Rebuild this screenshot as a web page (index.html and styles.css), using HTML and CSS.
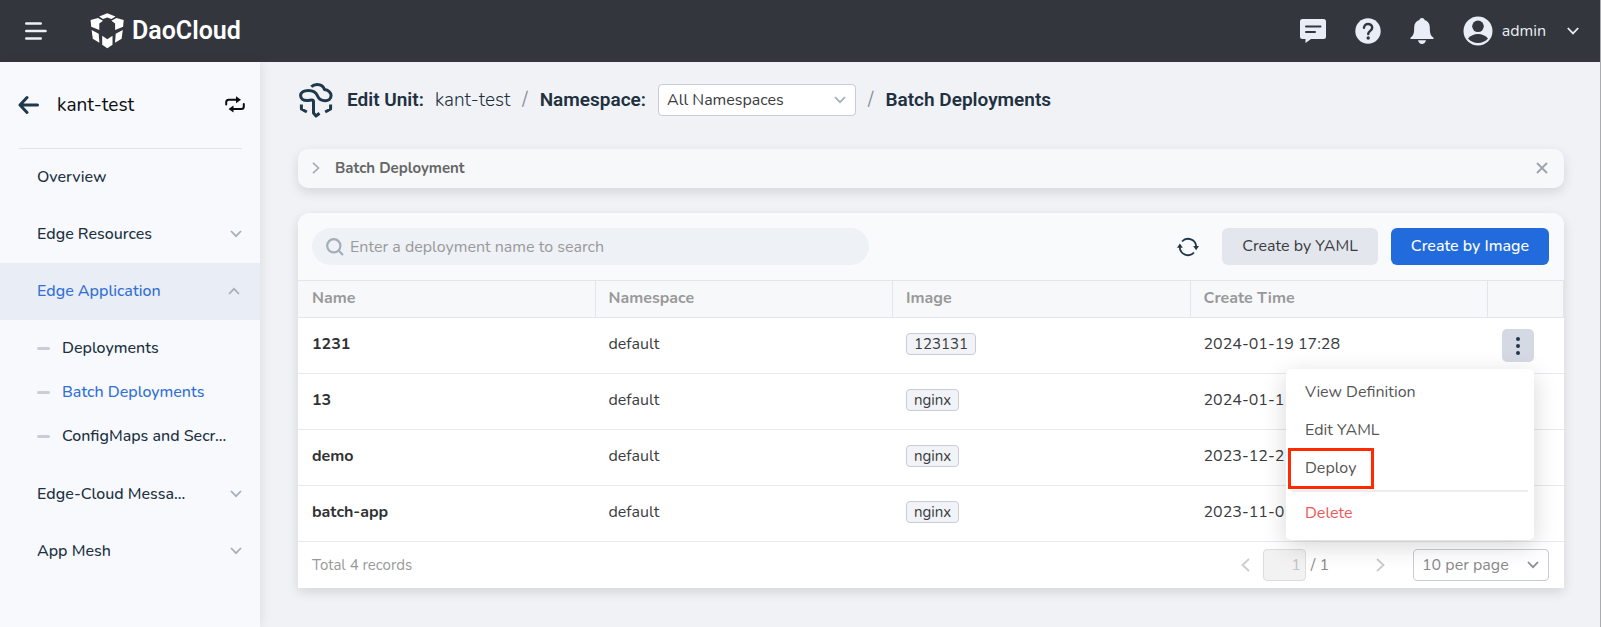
FILE: index.html
```html
<!DOCTYPE html>
<html lang="en">
<head>
<meta charset="utf-8">
<title>Batch Deployments - DaoCloud</title>
<link rel="stylesheet" href="styles.css">
</head>
<body>
<header class="topbar">
  <button class="icon-btn" aria-label="Toggle navigation">
    <svg width="22" height="20" viewBox="0 0 22 20" fill="none" stroke="#edf0f5" stroke-width="2.6" stroke-linecap="round"><path d="M1.3 2.5h14.4M1.3 10h19.2M1.3 17.500h14.400"/></svg>
  </button>
  <a class="brand" href="#">
    <svg width="34" height="36" viewBox="0 0 34 36" fill="#fff"><path d="M17.200.2 25.500 3.500 21.500 6 17.200 4.500 13 6 9.200 3.500z"/><path d="M.6 7 8 5l5 2.700-3.700 2.800V17L1.200 13.700z"/><path d="M33.700 7 26.400 5l-5 2.700 3.700 2.800V17l8-3.300z"/><path d="M1.600 17 8.700 20.800 9.400 29.800 2.800 25.700z"/><path d="M32.800 17 25.700 20.800 25 29.800 31.600 25.700z"/><path d="M12.200 22.800 17.300 26.200 22.500 22.800V31.800L17.300 35.300 12.200 31.800z"/></svg>
    <span>DaoCloud</span>
  </a>
  <nav class="top-actions" aria-label="Account">
    <button class="icon-btn" aria-label="Messages"><svg width="26" height="24" viewBox="0 0 26 24"><path fill="#e9eef6" d="M2.500 0h21A2.500 2.500 0 0 1 26 2.500v15a2.500 2.500 0 0 1-2.500 2.500H11l-5.500 4v-4h-3A2.500 2.500 0 0 1 0 17.500v-15A2.500 2.500 0 0 1 2.500 0z"/><path stroke="#33363c" stroke-width="2" stroke-linecap="round" d="M6 7.500h14.500M6 13h9"/></svg></button>
    <button class="icon-btn" aria-label="Help"><svg width="26" height="26" viewBox="0 0 26 26"><circle cx="13" cy="13" r="12.700" fill="#e9eef6"/><path fill="none" stroke="#33363c" stroke-width="2.400" stroke-linecap="round" d="M9 9.800C9 7.500 10.800 6 13 6s4.200 1.500 4.200 3.700c0 3-4 3.300-4 6.300"/><circle cx="13.200" cy="20" r="1.700" fill="#33363c"/></svg></button>
    <button class="icon-btn" aria-label="Notifications"><svg width="24" height="26" viewBox="0 0 24 26" fill="#e9eef6"><path d="M12 0c1.500 0 2.400.8 2.600 2 3.400 1 5.200 3.800 5.200 7.200 0 6 .8 8.500 3.500 10.300.7.500.5 1.500-.5 1.500H1.200c-1 0-1.200-1-.5-1.500 2.700-1.800 3.500-4.300 3.500-10.300C4.200 5.800 6 3 9.400 2 9.600.8 10.500 0 12 0zM8 22.200h8C15.500 24.600 14 26 12 26s-3.500-1.400-4-3.800z"/></svg></button>
    <button class="account">
      <svg width="30" height="30" viewBox="0 0 30 30"><circle cx="15" cy="15" r="14.500" fill="#e9eef6"/><circle cx="15" cy="10.300" r="5.800" fill="#33363c"/><path fill="#33363c" d="M5 22.500c2.500-3 6-4.500 10-4.500s7.500 1.500 10 4.500C22.500 25.300 19 27 15 27S7.500 25.300 5 22.500z"/></svg>
      <span>admin</span>
      <svg class="account-caret" width="12" height="8" viewBox="0 0 12 8" fill="none" stroke="#e9eef6" stroke-width="1.800"><path d="m.8 1 5.200 5.400L11.200 1"/></svg>
    </button>
  </nav>
</header>

<div class="layout">
  <aside class="sidebar">
    <div class="unit">
      <button class="icon-btn" aria-label="Back"><svg width="22" height="20" viewBox="0 0 22 20" fill="none" stroke="#20384c" stroke-width="3"><path d="M9 2.500 2 10l7 7.500M2.500 10H19.500" stroke-linecap="round" stroke-linejoin="round"/></svg></button>
      <span class="unit-name">kant-test</span>
      <button class="icon-btn" aria-label="Switch unit"><svg width="20" height="17" viewBox="0 0 20 17" fill="none" stroke="#0b0d10" stroke-width="2"><path d="M1.200 8.500V6.200c0-1.500 1-2.500 2.500-2.500H12M18.800 8v2.500c0 1.500-1 2.500-2.500 2.500H8" stroke-linecap="round"/><path d="m11 .3 5 3.400-5 3.500zM8.500 9.600l-5 3.400 5 3.500z" fill="#0b0d10" stroke="none"/></svg></button>
    </div>
    <nav class="menu" aria-label="Unit">
      <a class="menu-item" href="#">Overview</a>
      <a class="menu-item" href="#">Edge Resources <svg class="caret" viewBox="0 0 12 8"><path d="m1 1 5 5.200L11 1"/></svg></a>
      <a class="menu-item active" href="#">Edge Application <svg class="caret" viewBox="0 0 12 8"><path d="m1 7 5-5.200L11 7"/></svg></a>
      <div class="submenu">
        <a class="submenu-item" href="#">Deployments</a>
        <a class="submenu-item current" href="#">Batch Deployments</a>
        <a class="submenu-item" href="#">ConfigMaps and Secr...</a>
      </div>
      <a class="menu-item" href="#">Edge-Cloud Messa... <svg class="caret" viewBox="0 0 12 8"><path d="m1 1 5 5.200L11 1"/></svg></a>
      <a class="menu-item" href="#">App Mesh <svg class="caret" viewBox="0 0 12 8"><path d="m1 1 5 5.200L11 1"/></svg></a>
    </nav>
  </aside>

  <main class="content">
    <div class="crumbs">
      <svg class="crumb-icon" width="36" height="36" viewBox="0 0 36 36" fill="none" stroke="#20384c" stroke-width="3" stroke-linejoin="round"><path d="M13.300 4.800C15 3 17 2.400 19.200 2.400c3.600 0 6.300 2 7.300 5.200 3.700.3 6.600 2.900 6.600 6 0 3.300-2.600 5.200-5.800 5.200-4.500 0-6.600-1.800-8-5.300-1.300-3.300-4-5.100-9-5.100-4.300 0-7.700 2-7.700 5.100s2.700 5.100 6.400 5.100c2 0 3-.6 4.700-.6 1.200 0 1.800.6 1.800 1.800V31l2.500 3 3.500-2.700"/><path d="M3.400 22.500v4.500l5.400 3M32.600 22.500v4.500l-5.400 3"/></svg>
      <strong>Edit Unit:</strong>
      <span class="crumb-value">kant-test</span>
      <span class="slash">/</span>
      <label class="crumb-label" for="namespace">Namespace:</label>
      <span class="select-wrap">
        <select id="namespace" class="select select-ns"><option>All Namespaces</option></select>
        <svg class="caret" viewBox="0 0 12 8"><path d="m1 1 5 5.200L11 1"/></svg>
      </span>
      <span class="slash">/</span>
      <h1>Batch Deployments</h1>
    </div>

    <section class="notice">
      <button class="icon-btn" aria-label="Expand"><svg width="8" height="12" viewBox="0 0 8 12" fill="none" stroke="#a3a9b1" stroke-width="1.600"><path d="m1 .8 5.500 5.200L1 11.200"/></svg></button>
      <span class="notice-title">Batch Deployment</span>
      <button class="icon-btn" aria-label="Close"><svg width="12" height="12" viewBox="0 0 12 12" fill="none" stroke="#9ca3ad" stroke-width="1.800"><path d="m1 1 10 10M11 1 1 11"/></svg></button>
    </section>

    <section class="panel">
      <div class="toolbar">
        <label class="search">
          <svg width="18" height="18" viewBox="0 0 18 18" fill="none" stroke="#a5adb6" stroke-width="2.200"><circle cx="7.800" cy="7.800" r="6.600"/><path d="m12.500 12.500 4.500 4.500"/></svg>
          <input type="text" aria-label="Deployment name" placeholder="Enter a deployment name to search">
        </label>
        <button class="icon-btn refresh" aria-label="Refresh"><svg width="22" height="20" viewBox="0 0 22 20" fill="none" stroke="#20384c" stroke-width="1.800"><path d="M5 4.500A8.200 8.200 0 0 1 19.200 10M17 15.500A8.200 8.200 0 0 1 2.800 10"/><path d="m0 10.800 2.900-4.300 2.900 4.300zM16.200 9l2.900 4.300L22 9z" fill="#20384c" stroke="none"/></svg></button>
        <button class="btn">Create by YAML</button>
        <button class="btn btn-primary">Create by Image</button>
      </div>

      <table class="grid">
        <thead>
          <tr><th>Name</th><th>Namespace</th><th>Image</th><th>Create Time</th><th class="col-actions" aria-label="Actions"></th></tr>
        </thead>
        <tbody>
          <tr>
            <td class="name">1231</td><td>default</td><td><span class="tag">123131</span></td><td>2024-01-19 17:28</td>
            <td class="col-actions">
              <div class="row-actions">
                <button class="more" aria-label="More actions" aria-expanded="true"><svg width="6" height="20" viewBox="0 0 6 20" fill="#20384c"><circle cx="3" cy="3" r="2"/><circle cx="3" cy="10" r="2"/><circle cx="3" cy="17" r="2"/></svg></button>
                <div class="dropdown">
                  <button class="dropdown-item">View Definition</button>
                  <button class="dropdown-item">Edit YAML</button>
                  <button class="dropdown-item marked">Deploy</button>
                  <hr>
                  <button class="dropdown-item danger">Delete</button>
                </div>
              </div>
            </td>
          </tr>
          <tr><td class="name">13</td><td>default</td><td><span class="tag">nginx</span></td><td>2024-01-1</td><td class="col-actions"></td></tr>
          <tr><td class="name">demo</td><td>default</td><td><span class="tag">nginx</span></td><td>2023-12-2</td><td class="col-actions"></td></tr>
          <tr><td class="name">batch-app</td><td>default</td><td><span class="tag">nginx</span></td><td>2023-11-0</td><td class="col-actions"></td></tr>
        </tbody>
      </table>

      <footer class="pager">
        <span class="total">Total 4 records</span>
        <button class="icon-btn" aria-label="Previous page" disabled><svg width="9" height="14" viewBox="0 0 9 14" fill="none" stroke="#ccc" stroke-width="1.800"><path d="M8 1 1.500 7 8 13"/></svg></button>
        <input class="page-no" type="text" value="1" aria-label="Page" disabled>
        <span class="page-count">/ 1</span>
        <button class="icon-btn next" aria-label="Next page" disabled><svg width="9" height="14" viewBox="0 0 9 14" fill="none" stroke="#ccc" stroke-width="1.800"><path d="m1 1 6.500 6L1 13"/></svg></button>
        <span class="select-wrap">
          <select class="select select-size" aria-label="Page size"><option>10 per page</option></select>
          <svg class="caret dark" viewBox="0 0 12 8"><path d="m1 1 5 5.200L11 1"/></svg>
        </span>
      </footer>
    </section>
  </main>
</div>
</body>
</html>
```
FILE: styles.css
```css
*, *::before, *::after { box-sizing: border-box; }

body {
  margin: 0;
  min-height: 100vh;
  display: flex;
  flex-direction: column;
  border-right: 1px solid #a9abae;
  background: #f1f2f6;
  color: #3a3b3e;
  font: 16px/24px "Nunito", "Open Sans", "Noto Sans", sans-serif;
}

button, input, select { font: inherit; color: inherit; }
button { margin: 0; padding: 0; border: 0; background: none; cursor: pointer; }
a { color: inherit; text-decoration: none; }
svg { display: block; flex: none; }
.icon-btn { display: flex; align-items: center; justify-content: center; flex: none; }

.caret { width: 12px; height: 8px; fill: none; stroke: #a8afb8; stroke-width: 1.8; }
.caret.dark { stroke: #8a8d91; }

/* Top bar */
.topbar {
  display: flex;
  align-items: center;
  height: 62px;
  padding: 0 21px 1px 25px;
  background: #33363c;
  color: #e9eef6;
}
.brand {
  display: flex;
  align-items: center;
  gap: 8px;
  margin-left: 43px;
  color: #fff;
  font: 600 25px/32px Roboto, sans-serif;
}
.top-actions { display: flex; align-items: center; gap: 29px; margin-left: auto; }
.account { display: flex; align-items: center; gap: 9px; }
.account-caret { margin-left: 12px; }

/* Side navigation */
.layout { display: flex; flex: 1; }
.sidebar {
  flex: none;
  width: 260px;
  background: #f7f9fd;
  box-shadow: 2px 0 10px rgba(0, 0, 0, 0.08);
  color: #20303f;
}
.unit {
  display: flex;
  align-items: center;
  height: 87px;
  margin: 0 15px 0 18px;
  padding-bottom: 2px;
}
.unit-name { flex: 1; margin-left: 17px; color: #0b0d10; font-size: 19px; }
.menu { display: flex; flex-direction: column; font-weight: 500; }
.menu::before { content: ""; height: 1px; margin: -1px 18px 0 19px; background: #e0e3ec; }
.menu-item {
  display: flex;
  align-items: center;
  justify-content: space-between;
  height: 57px;
  padding: 0 18px 2px 37px;
}
.menu-item.active { padding-right: 20px; background: #e9edf5; color: #3270d4; }
.submenu { padding: 6px 0 8px; }
.submenu-item { display: flex; align-items: center; gap: 12px; height: 44px; padding-left: 37px; }
.submenu-item::before { content: ""; width: 13px; height: 3px; border-radius: 2px; background: #c9ced6; }
.submenu-item.current { color: #3270d4; }

/* Page heading */
.content { flex: 1; min-width: 0; padding: 22px 36px 39px 38px; }
.crumbs {
  display: flex;
  align-items: center;
  height: 32px;
  color: #20303f;
  font-size: 19px;
}
.crumbs strong, .crumb-label, .crumbs h1 { margin: 0; font: 600 19px/24px Roboto, sans-serif; }
.crumbs strong { margin-left: 13px; }
.crumb-value { margin-left: 11px; font-weight: 300; }
.slash { margin: 0 12px; color: #8d939b; }
.crumb-label { margin-right: 12px; }

.select-wrap { display: grid; align-items: center; }
.select-wrap > * { grid-area: 1 / 1; }
.select-wrap .caret { justify-self: end; margin-right: 10px; pointer-events: none; }
.select {
  appearance: none;
  height: 32px;
  padding: 0 30px 0 8px;
  border: 1px solid #c8ccd8;
  border-radius: 4px;
  background: #fff;
  color: #3a3b3e;
  font-size: 16px;
}
.select-ns { width: 198px; }
.select-size { width: 136px; color: #8a8a8a; }

/* Collapsed notice */
.notice {
  display: flex;
  align-items: center;
  height: 39px;
  margin-top: 33px;
  padding: 0 16px 2px 14px;
  border-radius: 10px;
  background: #f7f8fa;
  box-shadow: 0 4px 12px rgba(0, 0, 0, 0.12);
}
.notice-title { flex: 1; margin-left: 15px; color: #666; font-size: 15px; font-weight: 700; }

/* Table panel */
.panel {
  margin-top: 25px;
  border-radius: 12px 12px 0 0;
  background: #fff;
  box-shadow: 0 4px 12px rgba(0, 0, 0, 0.12);
}
.toolbar {
  display: flex;
  align-items: center;
  gap: 13px;
  height: 67px;
  padding: 0 15px 0 14px;
  border-radius: 12px 12px 0 0;
  background: #f9fafc;
}
.search {
  display: flex;
  align-items: center;
  gap: 6px;
  width: 45%;
  height: 37px;
  margin-right: auto;
  padding: 0 14px;
  border-radius: 19px;
  background: #eef1f6;
}
.search input { flex: 1; min-width: 0; padding: 0; border: 0; outline: 0; background: none; }
.search input::placeholder { color: #999; opacity: 1; }
.refresh { margin-right: 10px; }
.btn { height: 37px; padding: 0 20px 2px; border-radius: 6px; background: #e3e6ed; white-space: nowrap; }
.btn-primary { background: #226bdc; color: #fff; font-weight: 500; }

.grid { width: 100%; border-collapse: separate; border-spacing: 0; table-layout: fixed; }
.grid th {
  height: 38px;
  padding: 0 13px 2px;
  border: solid #e2e4ee;
  border-width: 1px 1px 1px 0;
  background: #f7f8fa;
  color: #999;
  font-weight: 700;
  text-align: left;
}
.grid td { height: 56px; padding: 0 13px 4px; border-bottom: 1px solid #e8e9ee; }
.grid th:first-child, .grid td:first-child { padding-left: 14px; }
.grid .name { color: #303133; font-weight: 700; }
.grid .col-actions { width: 76px; padding: 0; }
.tag {
  display: inline-block;
  padding: 0 7px;
  border: 1px solid #c8ccd8;
  border-radius: 4px;
  background: #f1f3f7;
  font-size: 15px;
  line-height: 20px;
}
.row-actions { position: relative; width: 32px; margin-left: 14px; }
.more {
  display: flex;
  align-items: center;
  justify-content: center;
  width: 32px;
  height: 33px;
  border-radius: 5px;
  background: #d5d9e4;
}
.dropdown {
  position: absolute;
  z-index: 2;
  top: 40px;
  right: 0;
  display: flex;
  flex-direction: column;
  width: 248px;
  padding: 4px 0 8px;
  border-radius: 5px;
  background: #fff;
  box-shadow: 0 6px 24px rgba(0, 0, 0, 0.16);
}
.dropdown-item { position: relative; height: 38px; padding: 0 19px; color: #555; text-align: left; }
.dropdown-item.danger { color: #eb5757; }
.dropdown hr { width: 236px; height: 2px; margin: 3px auto 2px; border: 0; background: #ededf0; }
.marked::after {
  content: "";
  position: absolute;
  top: -1px;
  left: 2px;
  width: 86px;
  height: 41px;
  border: 3px solid #ff2a00;
}

/* Pagination */
.pager { display: flex; align-items: center; height: 46px; padding: 0 15px 0 14px; color: #8a8a8a; }
.total { margin-right: auto; color: #999; font-size: 15px; }
.page-no {
  width: 43px;
  height: 32px;
  margin: 0 5px 0 13px;
  padding: 0 4px;
  border: 1px solid #ddd;
  border-radius: 4px;
  background: #f2f2f2;
  color: #c4c4c4;
  text-align: right;
}
.next { margin: 0 28px 0 47px; }
```
